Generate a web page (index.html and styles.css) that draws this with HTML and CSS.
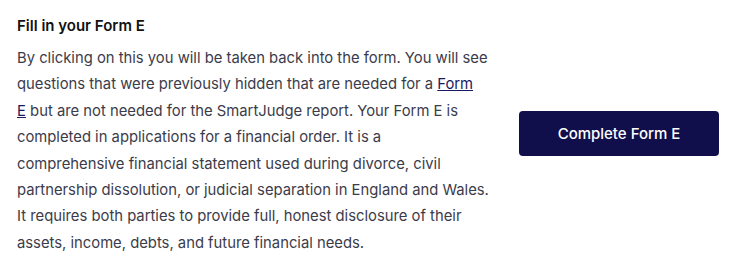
FILE: index.html
```html
<!DOCTYPE html>
<html lang="en">
<head>
    <meta charset="UTF-8">
    <title>Fill in your Form E</title>
    <link rel="stylesheet" href="styles.css">
</head>
<body>
    <div class="panel">
        <div class="panel__text">
            <h3>Fill in your Form E</h3>
            <p>By clicking on this you will be taken back into the form. You will see<br>
            questions that were previously hidden that are needed for a <a href="#">Form<br>
            E</a> but are not needed for the SmartJudge report. Your Form E is<br>
            completed in applications for a financial order. It is a<br>
            comprehensive financial statement used during divorce, civil<br>
            partnership dissolution, or judicial separation in England and Wales.<br>
            It requires both parties to provide full, honest disclosure of their<br>
            assets, income, debts, and future financial needs.</p>
        </div>
        <div class="panel__action">
            <button class="btn">Complete Form E</button>
        </div>
    </div>
</body>
</html>
```

FILE: styles.css
```css
body {
    margin: 0;
    background-color: #fff;
    font-family: Inter, "Noto Sans", sans-serif;
    color: #3b3b4a;
}

.panel {
    display: flex;
    align-items: center;
    padding: 16px 18px 0 17px;
}

.panel__text {
    width: 475px;
}

h3 {
    margin: 0 0 9px;
    font-size: 15px;
    font-weight: 600;
    color: #111;
    line-height: 20px;
}

p {
    margin: 0;
    font-size: 14.8px;
    line-height: 26.4px;
    white-space: nowrap;
}

a {
    color: #1a1a5e;
    text-decoration: underline;
}

.panel__action {
    flex: 1;
    display: flex;
    justify-content: flex-end;
    margin-bottom: 5px;
}

.btn {
    width: 200px;
    height: 45px;
    background-color: #110f4b;
    color: #fff;
    border: none;
    border-radius: 4px;
    font-family: inherit;
    font-size: 15px;
    font-weight: 500;
}
```
